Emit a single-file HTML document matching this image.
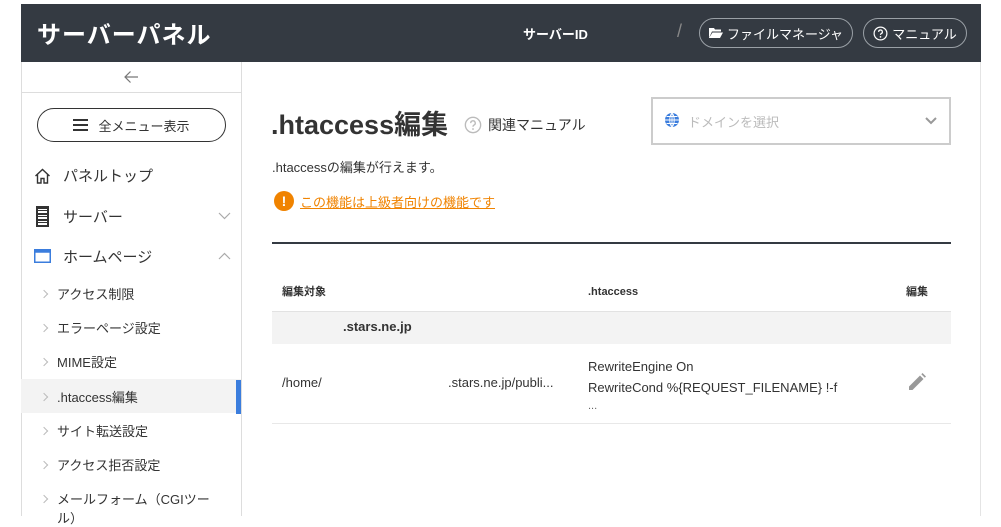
<!DOCTYPE html><html><head><meta charset="utf-8"><style>
*{box-sizing:border-box;margin:0;padding:0}
body{width:1001px;height:516px;overflow:hidden;background:#fff;font-family:"Liberation Sans","Noto Sans CJK JP",sans-serif;color:#333;position:relative}
.a{position:absolute;white-space:nowrap}
.hdr{left:21px;top:4px;width:960px;height:58px;background:#343a42}
.pill{border:1px solid #9aa0a6;border-radius:16px;color:#fff;font-size:13px;display:flex;align-items:center;justify-content:center;gap:4px}
.sub{left:21px;width:220px;height:34px;font-size:13px;color:#333;display:flex;align-items:center;padding-left:36px}
.sub::before{content:"";position:absolute;left:20px;top:15px;width:5px;height:5px;border-right:1px solid #bbb;border-top:1px solid #bbb;transform:rotate(45deg)}
.nav{left:21px;width:220px;font-size:15px;color:#333;display:flex;align-items:center;padding-left:42px;height:30px}
.th{font-size:11px;font-weight:bold;line-height:14px}
</style></head><body>
<div class="a hdr"></div>
<div class="a" style="left:37px;top:15px;color:#fff;font-size:24px;font-weight:bold;letter-spacing:1px">サーバーパネル</div>
<div class="a" style="left:523px;top:24px;color:#fff;font-size:13px;font-weight:bold">サーバーID</div>
<div class="a" style="left:677px;top:21px;color:#888;font-size:18px">/</div>
<div class="a pill" style="left:699px;top:18px;width:154px;height:30px"><svg width="14" height="12" viewBox="0 0 14 12"><path d="M0 1h5l1 1.5h6v2H3L0 11z M3.5 5.5H14L11 11H0z" fill="#fff"/></svg>ファイルマネージャ</div>
<div class="a pill" style="left:863px;top:18px;width:104px;height:30px"><svg width="15" height="15" viewBox="0 0 16 16"><circle cx="8" cy="8" r="6.8" fill="none" stroke="#fff" stroke-width="1.3"/><path d="M6 6.3a2 2 0 1 1 2.8 1.8c-.6.3-.8.7-.8 1.4" fill="none" stroke="#fff" stroke-width="1.3"/><circle cx="8" cy="11.6" r=".9" fill="#fff"/></svg>マニュアル</div>
<div class="a" style="left:21px;top:62px;width:1px;height:454px;background:#ddd"></div>
<div class="a" style="left:241px;top:62px;width:1px;height:454px;background:#ddd"></div>
<div class="a" style="left:980px;top:62px;width:1px;height:454px;background:#e4e4e4"></div>
<div class="a" style="left:21px;top:92px;width:220px;height:1px;background:#ddd"></div>
<svg class="a" style="left:123px;top:70px" width="16" height="14" viewBox="0 0 16 14"><path d="M15 7H2M7.5 1.5 2 7l5.5 5.5" fill="none" stroke="#777" stroke-width="1.2"/></svg>
<div class="a" style="left:37px;top:108px;width:189px;height:34px;border:1px solid #333;border-radius:17px;display:flex;align-items:center;justify-content:center;gap:10px;font-size:13px">
<svg width="15" height="12" viewBox="0 0 15 12"><path d="M0 1h15M0 6h15M0 11h15" stroke="#333" stroke-width="2"/></svg>全メニュー表示</div>
<svg class="a" style="left:34px;top:168px" width="17" height="16" viewBox="0 0 17 16"><path d="M1.5 8 8.5 1.5 15.5 8M3.5 6.5V15h3.5v-4.5h3V15h3.5V6.5" fill="none" stroke="#333" stroke-width="1.4"/></svg>
<div class="a nav" style="top:160px">パネルトップ</div>
<svg class="a" style="left:36px;top:206px" width="13" height="21" viewBox="0 0 13 21"><rect x="0" y="0" width="13" height="21" fill="#333"/><path d="M2 3h9v4H2zM2 9h9v4H2zM2 15h9v4H2z" fill="#fff"/><path d="M2 4.5h9M2 10.5h9M2 16.5h9" stroke="#333"/></svg>
<div class="a nav" style="top:201px">サーバー</div>
<svg class="a" style="left:218px;top:212px" width="13" height="8" viewBox="0 0 13 8"><path d="M1 1l5.5 5.5L12 1" fill="none" stroke="#aaa" stroke-width="1.2"/></svg>
<svg class="a" style="left:34px;top:249px" width="17" height="14" viewBox="0 0 17 14"><rect x=".75" y=".75" width="15.5" height="12.5" fill="none" stroke="#3b7ddd" stroke-width="1.5"/><rect x=".75" y=".75" width="15.5" height="3" fill="#3b7ddd"/></svg>
<div class="a nav" style="top:241px">ホームページ</div>
<svg class="a" style="left:218px;top:252px" width="13" height="8" viewBox="0 0 13 8"><path d="M1 7l5.5-5.5L12 7" fill="none" stroke="#aaa" stroke-width="1.2"/></svg>
<div class="a sub" style="top:276px">アクセス制限</div>
<div class="a sub" style="top:310px">エラーページ設定</div>
<div class="a sub" style="top:344px">MIME設定</div>
<div class="a sub" style="top:379px;background:#f3f3f3">.htaccess編集</div>
<div class="a" style="left:236px;top:380px;width:5px;height:34px;background:#3b7ddd"></div>
<div class="a sub" style="top:413px">サイト転送設定</div>
<div class="a sub" style="top:447px">アクセス拒否設定</div>
<div class="a sub" style="top:481px">メールフォーム（CGIツー</div>
<div class="a" style="left:57px;top:508px;font-size:13px">ル）</div>
<div class="a" style="left:271px;top:103px;font-size:27px;font-weight:bold;color:#333">.htaccess編集</div>
<svg class="a" style="left:464px;top:116px" width="18" height="18" viewBox="0 0 16 16"><circle cx="8" cy="8" r="6.8" fill="none" stroke="#bbb" stroke-width="1.2"/><path d="M6 6.3a2 2 0 1 1 2.8 1.8c-.6.3-.8.7-.8 1.4" fill="none" stroke="#bbb" stroke-width="1.2"/><circle cx="8" cy="11.6" r=".8" fill="#bbb"/></svg>
<div class="a" style="left:488px;top:115px;font-size:14px">関連マニュアル</div>
<div class="a" style="left:651px;top:97px;width:300px;height:48px;border:2px solid #ccc"></div>
<svg class="a" style="left:664px;top:112px" width="16" height="16" viewBox="0 0 16 16"><circle cx="8" cy="8" r="7" fill="#3b7ddd"/><path d="M1 8h14M8 1v14M2.5 4.5h11M2.5 11.5h11M8 1c-3 3-3 11 0 14M8 1c3 3 3 11 0 14" fill="none" stroke="#fff" stroke-width=".9"/></svg>
<div class="a" style="left:688px;top:112px;font-size:13px;color:#bbb">ドメインを選択</div>
<svg class="a" style="left:925px;top:117px" width="12" height="8" viewBox="0 0 12 8"><path d="M1 1l5 5 5-5" fill="none" stroke="#999" stroke-width="2"/></svg>
<div class="a" style="left:272px;top:157px;font-size:13px">.htaccessの編集が行えます。</div>
<div class="a" style="left:274px;top:191px;width:20px;height:20px;border-radius:50%;background:#f08300;color:#fff;font-size:14px;font-weight:bold;text-align:center;line-height:20px">!</div>
<div class="a" style="left:300px;top:192px;font-size:13px;color:#f08300;text-decoration:underline">この機能は上級者向けの機能です</div>
<div class="a" style="left:272px;top:242px;width:679px;height:2px;background:#343a42"></div>
<div class="a th" style="left:282px;top:285px">編集対象</div>
<div class="a th" style="left:588px;top:285px">.htaccess</div>
<div class="a th" style="left:906px;top:285px">編集</div>
<div class="a" style="left:272px;top:311px;width:679px;height:33px;background:#f3f3f3;border-top:1px solid #e2e2e2"></div>
<div class="a" style="left:343px;top:319px;font-size:13px;font-weight:bold">.stars.ne.jp</div>
<div class="a" style="left:282px;top:375px;font-size:13px">/home/</div>
<div class="a" style="left:448px;top:375px;font-size:13px">.stars.ne.jp/publi...</div>
<div class="a" style="left:588px;top:356px;font-size:13px;line-height:21px">RewriteEngine On<br>RewriteCond %{REQUEST_FILENAME} !-f</div>
<div class="a" style="left:588px;top:400px;font-size:11px;color:#666">...</div>
<svg class="a" style="left:908px;top:373px" width="18" height="18" viewBox="0 0 18 18"><path d="M1 17v-3.5L12 2.5 15.5 6 4.5 17zM13.3 1.2l1.2-1.2 3.5 3.5-1.2 1.2z" fill="#999"/></svg>
<div class="a" style="left:272px;top:423px;width:679px;height:1px;background:#e8e8e8"></div>
</body></html>
